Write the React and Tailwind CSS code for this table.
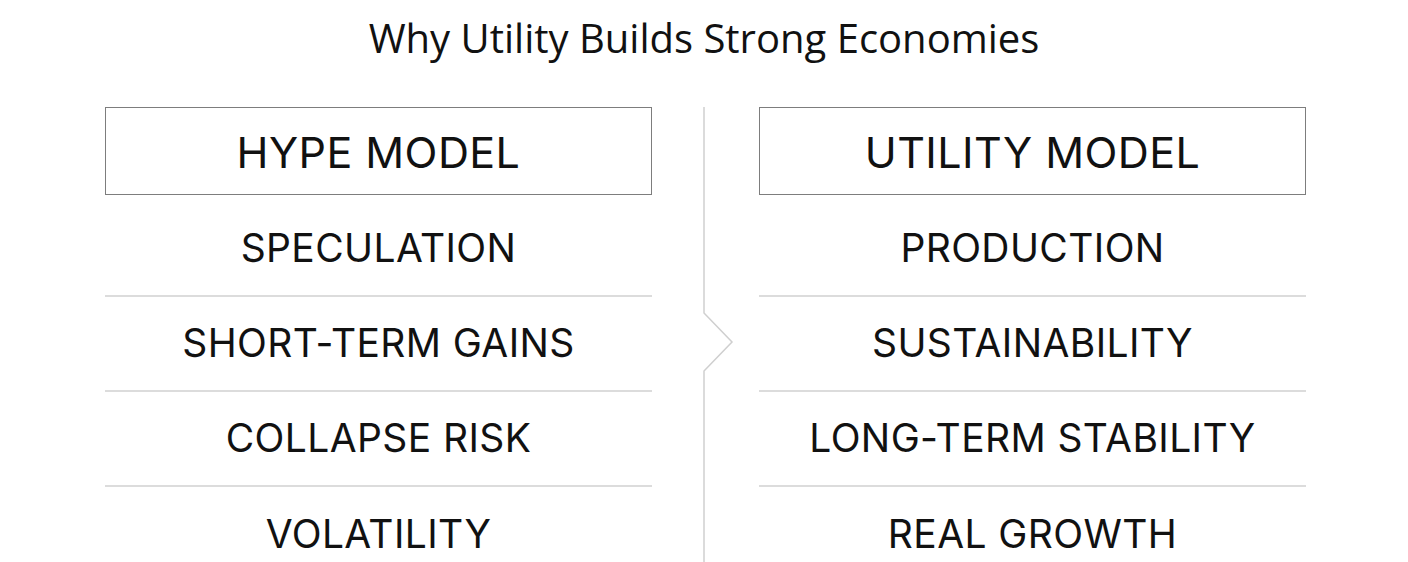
import React from "react";

const hype = ["SPECULATION", "SHORT-TERM GAINS", "COLLAPSE RISK", "VOLATILITY"];
const utility = ["PRODUCTION", "SUSTAINABILITY", "LONG-TERM STABILITY", "REAL GROWTH"];

const itemFont = { fontFamily: "Inter, 'Liberation Sans', sans-serif" };

const Column = ({ title, items }) => (
  <div className="w-[547px] flex flex-col">
    <div className="h-[88px] border border-[#7d7d7d] flex items-center justify-center text-[43px] text-[#111] tracking-[0.01em] pt-[2px]">
      {title}
    </div>
    <div className="mt-[7px] flex flex-col">
      {items.map((item) => (
        <div
          key={item}
          className="h-[95px] border-b-2 border-[#dcdcdc] last:border-b-0 flex items-center justify-center text-[39px] text-[#111] tracking-[0.01em]"
        >
          {item}
        </div>
      ))}
    </div>
  </div>
);

const Divider = () => (
  <div className="w-[107px] shrink-0">
    <svg width="107" height="470" viewBox="0 0 107 470" fill="none">
      <path
        d="M52 0 V206 L80 235 L52 264 V470"
        stroke="#cfcfcf"
        strokeWidth="1.5"
      />
    </svg>
  </div>
);

export default function App() {
  return (
    <div className="w-[1408px] h-[562px] overflow-hidden bg-white" style={itemFont}>
      <div className="pt-[14px] h-[107px]">
        <h1
          className="text-center text-[40px] leading-[48px] text-[#111] font-normal"
          style={{ fontFamily: "'Open Sans', 'Noto Sans', sans-serif" }}
        >
          Why Utility Builds Strong Economies
        </h1>
      </div>
      <div className="flex pl-[105px]">
        <Column title="HYPE MODEL" items={hype} />
        <Divider />
        <Column title="UTILITY MODEL" items={utility} />
      </div>
    </div>
  );
}
